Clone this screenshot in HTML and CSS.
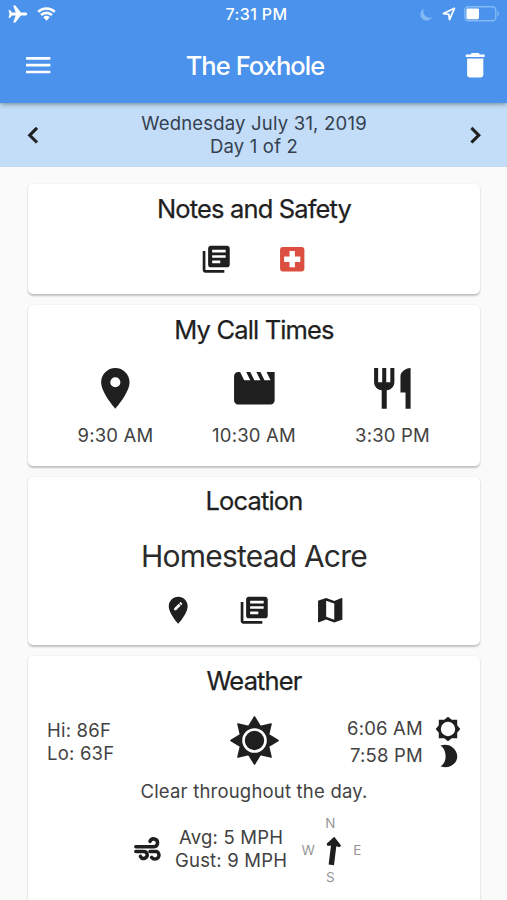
FILE: index.html
```html
<!DOCTYPE html>
<html lang="en">
<head>
<meta charset="utf-8">
<title>The Foxhole</title>
<link rel="stylesheet" href="styles.css">
</head>
<body>
<svg class="defs" aria-hidden="true">
  <symbol id="library" viewBox="0 0 24 24"><path d="M4 6H2v14c0 1.1.9 2 2 2h14v-2H4V6zm16-4H8c-1.1 0-2 .9-2 2v12c0 1.1.9 2 2 2h12c1.1 0 2-.9 2-2V4c0-1.1-.9-2-2-2zm-1 9H9V9h10v2zm-4 4H9v-2h6v2zm4-8H9V5h10v2z"/></symbol>
</svg>
<header class="top">
  <div class="status">
    <div class="status-left">
      <svg width="20" height="18" viewBox="0 0 20 18"><path d="M19.3 9c0-.8-.8-1.500-2-1.500h-4.400L7.500.5H5.200l2.500 6.900H4L2.300 5.300H.5L1.500 9l-1 3.700h1.800L4 10.600h3.700l-2.500 6.900h2.300l5.400-7h4.400c1.200 0 2-.7 2-1.500z"/></svg>
      <svg width="19" height="14" viewBox="0 0 19 14"><path class="arc" d="M1.2 4.900a12 12 0 0 1 16.600 0M4.100 8a7.800 7.800 0 0 1 10.800 0"/><path d="M9.500 13.700 6.300 10.300a4.700 4.700 0 0 1 6.400 0z"/></svg>
    </div>
    <div class="clock">7:31 PM</div>
    <div class="status-right">
      <svg width="13" height="13" viewBox="0 0 13 13"><path class="dim" d="M4 .6A6.300 6.300 0 1 0 12.400 9 6.300 6.300 0 0 1 4 .6z"/></svg>
      <svg width="14" height="14" viewBox="0 0 14 14"><path class="line" d="M12.500 1.300 1.400 6.600l5.400.7.7 5.400z"/></svg>
      <svg width="36" height="16" viewBox="0 0 36 16"><rect class="shell" x=".8" y=".8" width="31" height="14" rx="3.500"/><rect x="2.400" y="2.400" width="12.600" height="10.800" rx="1.400"/><path class="dim" d="M33.500 5.300c2.100.6 2.100 4.400 0 5z"/></svg>
    </div>
  </div>
  <div class="bar">
    <svg class="ic" viewBox="0 0 24 24"><path d="M3 18h18v-2H3v2zm0-5h18v-2H3v2zm0-7v2h18V6H3z"/></svg>
    <h1>The Foxhole</h1>
    <svg class="ic" viewBox="0 0 24 24"><path d="M6 19c0 1.100.9 2 2 2h8c1.100 0 2-.9 2-2V7H6v12zM19 4h-3.500l-1-1h-5l-1 1H5v2h14V4z"/></svg>
  </div>
</header>
<nav class="dates">
  <svg class="ic" viewBox="0 0 24 24"><path d="M15.410 7.410 14 6l-6 6 6 6 1.410-1.410L10.830 12z"/></svg>
  <p><span>Wednesday July 31, 2019</span><br><span>Day 1 of 2</span></p>
  <svg class="ic" viewBox="0 0 24 24"><path d="M10 6 8.590 7.410 13.170 12l-4.580 4.590L10 18l6-6z"/></svg>
</nav>
<main>
  <section class="card notes">
    <h2>Notes and Safety</h2>
    <div class="icons">
      <svg class="ic"><use href="#library"/></svg>
      <svg class="ic red" viewBox="0 0 24 24"><path d="M19 3H5c-1.100 0-2 .9-2 2v14c0 1.100.9 2 2 2h14c1.100 0 2-.9 2-2V5c0-1.100-.9-2-2-2zm-1 11h-4v4h-4v-4H6v-4h4V6h4v4h4v4z"/></svg>
    </div>
  </section>
  <section class="card calls">
    <h2>My Call Times</h2>
    <div class="times">
      <div><svg class="big" viewBox="0 0 24 24"><path d="M12 2C8.130 2 5 5.130 5 9c0 5.250 7 13 7 13s7-7.750 7-13c0-3.870-3.130-7-7-7zm0 9.500a2.500 2.500 0 0 1 0-5 2.500 2.500 0 0 1 0 5z"/></svg><p>9:30 AM</p></div>
      <div><svg class="big" viewBox="0 0 24 24"><path d="M18 4l2 4h-3l-2-4h-2l2 4h-3l-2-4H8l2 4H7L5 4H4c-1.100 0-2 .9-2 2v12c0 1.100.9 2 2 2h16c1.100 0 2-.9 2-2V4h-4z"/></svg><p>10:30 AM</p></div>
      <div><svg class="big" viewBox="0 0 24 24"><path d="M11 9H9V2H7v7H5V2H3v7c0 2.120 1.660 3.840 3.750 3.970V22h2.500v-9.030C11.340 12.840 13 11.120 13 9V2h-2v7zm5-3v8h2.500v8H21V2c-2.760 0-5 2.240-5 4z"/></svg><p>3:30 PM</p></div>
    </div>
  </section>
  <section class="card place">
    <h2>Location</h2>
    <p class="site">Homestead Acre</p>
    <div class="icons">
      <svg class="ic" viewBox="0 0 24 24"><path d="M12 2C8.140 2 5 5.140 5 9c0 5.250 7 13 7 13s7-7.750 7-13c0-3.860-3.140-7-7-7zm-1.560 10H9v-1.440l3.350-3.340 1.430 1.430L10.440 12zm4.450-4.450-.7.7-1.440-1.440.7-.7c.15-.15.39-.15.54 0l.9.9c.15.15.15.39 0 .54z"/></svg>
      <svg class="ic"><use href="#library"/></svg>
      <svg class="ic" viewBox="0 0 24 24"><path d="M20.500 3l-.16.03L15 5.100 9 3 3.360 4.900c-.21.07-.36.25-.36.48V20.500c0 .28.22.5.5.5l.16-.03L9 18.900l6 2.100 5.640-1.900c.21-.07.36-.25.36-.48V3.500c0-.28-.22-.5-.5-.5zM15 19l-6-2.110V5l6 2.110V19z"/></svg>
    </div>
  </section>
  <section class="card weather">
    <h2>Weather</h2>
    <div class="sky">
      <p class="temps">Hi: 86F<br>Lo: 63F</p>
      <svg class="sun" width="49" height="49" viewBox="-24.500 -24.500 49 49"><path class="rays" d="M0-23.500 5.800-14 16.600-16.600 14-5.800 23.500 0 14 5.800 16.600 16.600 5.800 14 0 23.500-5.800 14-16.600 16.600-14 5.800-23.500 0-14-5.800-16.600-16.600-5.800-14z"/><circle class="ring" r="11"/></svg>
      <div class="suntimes">
        <p>6:06 AM</p>
        <svg width="26" height="26" viewBox="-13 -13 26 26"><path fill-rule="evenodd" d="M0-12.300 3.800-9.200H9.200V-3.800L12.300 0 9.200 3.800V9.200H3.800L0 12.300-3.800 9.200H-9.200V3.800L-12.300 0-9.200-3.800V-9.200H-3.800zM0-7.200a7.200 7.200 0 1 0 0 14.400 7.200 7.200 0 0 0 0-14.400z"/></svg>
        <p>7:58 PM</p>
        <svg width="26" height="26" viewBox="-13 -13 26 26"><path d="M-7.500-10.500C-3.500-11.700 1-11.500 4-9 11-3.800 11 5 4 9.200 1 11.500-3.500 11.700-7.500 10.200-.7 6.500-.7-6-7.500-10.500z"/></svg>
      </div>
    </div>
    <p class="summary">Clear throughout the day.</p>
    <div class="wind">
      <svg class="gust" width="29" height="25" viewBox="0 0 29 25"><path d="M1.800 9.700H20a3.900 3.900 0 1 0-4-5.300M1.800 14.400H9.500a3.500 3.500 0 1 1-3 5M16 14.400H22.500a4 4 0 1 1-4.800 6"/></svg>
      <p class="speeds"><span>Avg: 5 MPH</span><br><span>Gust: 9 MPH</span></p>
      <div class="compass">
        <span class="n">N</span><span class="w">W</span>
        <svg width="18" height="30" viewBox="-9 -15 18 30"><path transform="rotate(7)" d="M-.5-14.300 7.300-6.500 6-4.400 2.700-5.200V13.900H-2.700V-5.200L-6-4.400-7.300-6.500z"/></svg>
        <span class="e">E</span><span class="s">S</span>
      </div>
    </div>
  </section>
</main>
</body>
</html>
```
FILE: styles.css
```css
* { box-sizing: border-box; margin: 0; padding: 0; }
html, body { height: 900px; overflow: hidden; }
body { background: #fafafa; color: #424242; font: 400 18.500px/23px Inter, "Liberation Sans", sans-serif; letter-spacing: .2px; }
svg { display: block; flex: none; fill: #1f1f1f; }
.defs { width: 0; height: 0; position: absolute; }
.ic { width: 32.450px; height: 32.450px; }
.top { position: relative; height: 103px; background: #4a92eb; color: #fff; box-shadow: 0 1px 5px rgba(0,0,0,.4); }
.top svg { fill: #fff; }
.status { height: 28px; display: grid; grid-template-columns: 1fr auto 1fr; align-items: center; padding: 0 7px 0 8px; }
.status-left, .status-right { display: flex; align-items: center; gap: 9px; }
.status-right { justify-content: flex-end; }
.status-right svg:last-child { margin-left: -1px; }
.status .arc { fill: none; stroke: #fff; stroke-width: 2.600; }
.status .line { fill: none; stroke: #fff; stroke-width: 1.700; stroke-linejoin: round; }
.status .dim { fill: #82baf5; }
.status .shell { fill: none; stroke: #82baf5; stroke-width: 1.400; }
.clock { font-size: 16px; font-weight: 500; letter-spacing: .4px; padding-left: 5px; }
.bar { height: 75px; display: flex; align-items: center; justify-content: space-between; padding: 0 16px 0 22px; }
h1 { font-size: 25.500px; font-weight: 500; letter-spacing: -.95px; line-height: 32px; margin-right: 3px; }
.dates { height: 64px; background: #c3ddf8; display: flex; align-items: center; justify-content: space-between; padding: 0 16px 0 17px; color: #34404f; }
.dates svg { stroke: #1f1f1f; stroke-width: .4; }
.dates p { text-align: center; }
main { padding: 17px 27px 0 28px; }
.card { background: #fff; border-radius: 5px; box-shadow: 0 1.500px 2px rgba(0,0,0,.22), 0 0 2px rgba(0,0,0,.06); margin-bottom: 11px; text-align: center; }
h2 { color: #1f1f1f; font-size: 25.500px; line-height: 32px; font-weight: 400; letter-spacing: -.85px; -webkit-text-stroke: .25px #1f1f1f; }
.notes { height: 110px; padding-top: 9px; }
.icons { display: flex; justify-content: center; gap: 43.300px; }
.notes .icons { margin-top: 18px; }
.red { fill: #dc4f40; }
.calls { height: 161px; padding-top: 9px; }
.times { display: grid; grid-template-columns: repeat(3, 138.500px); justify-content: center; margin-top: 18px; }
.big { width: 48.700px; height: 48.700px; margin: 0 auto 11px; }
.place { height: 168px; padding-top: 8px; }
.site { color: #2b2b2b; font-size: 30px; line-height: 38px; letter-spacing: -.8px; margin-top: 20px; }
.place .icons { margin-top: 19px; }
.weather { height: 270px; padding-top: 9px; }
.sky { display: grid; grid-template-columns: 1fr 49px 1fr; margin: 16px 19px 0; align-items: start; }
.temps { text-align: left; margin-top: 6px; }
.sun { margin-top: 3px; }
.rays { stroke: #1f1f1f; stroke-width: 1.500; stroke-linejoin: round; }
.ring { fill: none; stroke: #fff; stroke-width: 2.600; }
.suntimes { display: grid; grid-template-columns: auto 26px; justify-content: end; align-items: center; grid-auto-rows: 27px; column-gap: 12px; text-align: right; margin-top: 2px; }
.summary { margin-top: 11px; }
.wind { display: flex; margin: 12px 0 0 106px; align-items: flex-start; }
.gust { margin-top: 22px; }
.gust path { fill: none; stroke: #1f1f1f; stroke-width: 3.500; stroke-linecap: round; }
.speeds { margin: 11px 0 0 12px; }
.compass { display: grid; grid-template-columns: 18px 32px 16px; grid-template-rows: 17px 37px 17px; justify-items: center; align-items: center; margin: 0 0 0 12px; color: #969696; font-size: 13.500px; line-height: 17px; letter-spacing: 0; }
.n { grid-area: 1 / 2; margin-right: 6px; }
.w { grid-area: 2 / 1; }
.compass svg { grid-area: 2 / 2; }
.e { grid-area: 2 / 3; }
.s { grid-area: 3 / 2; margin-right: 6px; }
```
